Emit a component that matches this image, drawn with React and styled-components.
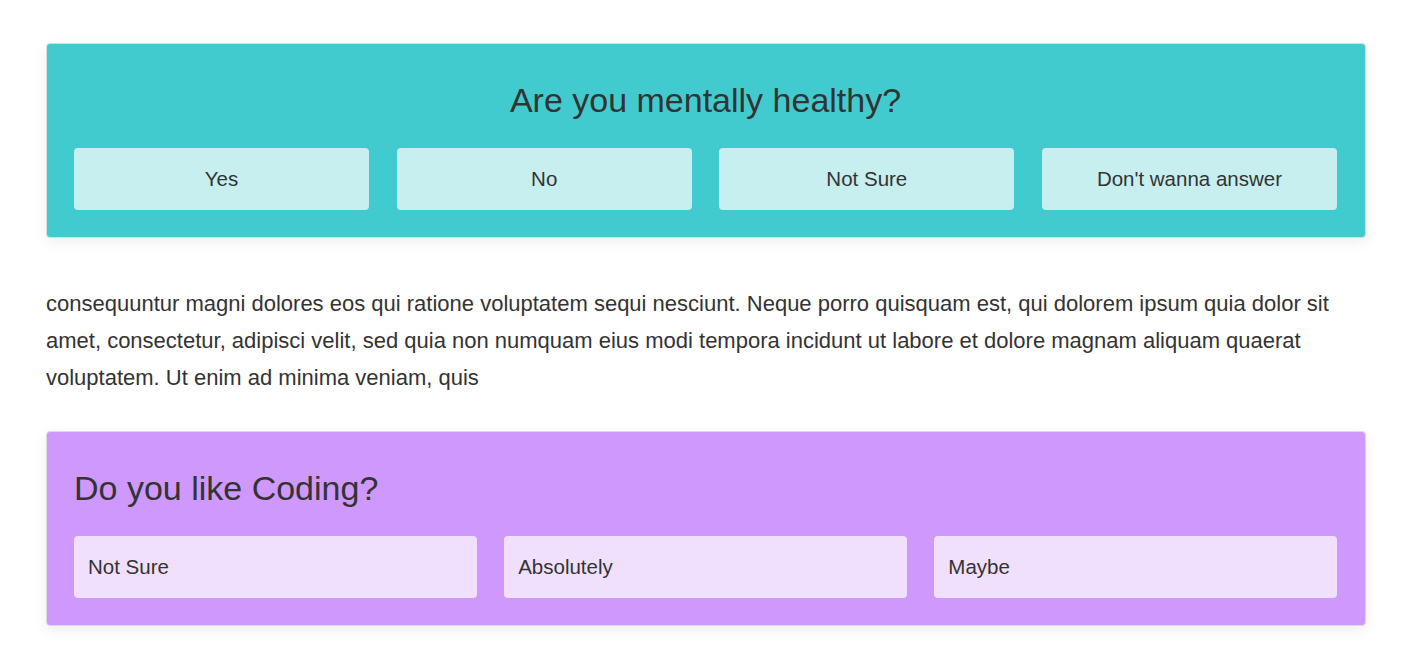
import styled, { createGlobalStyle } from "styled-components";

const GlobalStyle = createGlobalStyle`
  html, body {
    margin: 0;
    padding: 0;
    background: #fff;
  }
  body {
    font-family: "Liberation Sans", Arial, sans-serif;
    color: #333;
  }
`;

const Page = styled.div`
  width: 1320px;
  padding: 43px 62px 24px 46px;
`;

const Card = styled.section`
  background-color: ${(p) => p.$bg};
  border: 1px solid #dcdcdc;
  border-radius: 4px;
  box-shadow: 0 4px 14px rgba(0, 0, 0, 0.07);
  padding: 27px 28px 27px 27px;
  box-sizing: border-box;
`;

const Title = styled.h2`
  margin: 10px 0 29px;
  font-size: 34px;
  font-weight: 400;
  line-height: 38px;
  color: #333;
  text-align: ${(p) => (p.$center ? "center" : "left")};
`;

const Options = styled.div`
  display: grid;
  grid-template-columns: repeat(${(p) => p.$cols}, 1fr);
  gap: 27.5px;
`;

const Option = styled.button`
  height: 62px;
  border: none;
  border-radius: 4px;
  background-color: ${(p) => p.$bg};
  font-family: inherit;
  font-size: 20.5px;
  color: #333;
  text-align: ${(p) => (p.$center ? "center" : "left")};
  padding: 0 14px;
  cursor: pointer;
`;

const Text = styled.p`
  margin: 47px 0 35px;
  font-size: 22px;
  line-height: 37px;
  color: #333;
`;

const mental = ["Yes", "No", "Not Sure", "Don't wanna answer"];
const coding = ["Not Sure", "Absolutely", "Maybe"];

export default function App() {
  return (
    <>
      <GlobalStyle />
      <Page>
        <Card $bg="#42cbce">
          <Title $center>Are you mentally healthy?</Title>
          <Options $cols={4}>
            {mental.map((o) => (
              <Option key={o} $bg="#c7eff0" $center>
                {o}
              </Option>
            ))}
          </Options>
        </Card>
        <Text>
          consequuntur magni dolores eos qui ratione voluptatem sequi nesciunt.
          Neque porro quisquam est, qui dolorem ipsum quia dolor sit amet,
          consectetur, adipisci velit, sed quia non numquam eius modi tempora
          incidunt ut labore et dolore magnam aliquam quaerat voluptatem. Ut
          enim ad minima veniam, quis
        </Text>
        <Card $bg="#cf98fc">
          <Title>Do you like Coding?</Title>
          <Options $cols={3}>
            {coding.map((o) => (
              <Option key={o} $bg="#f0e0fe">
                {o}
              </Option>
            ))}
          </Options>
        </Card>
      </Page>
    </>
  );
}
